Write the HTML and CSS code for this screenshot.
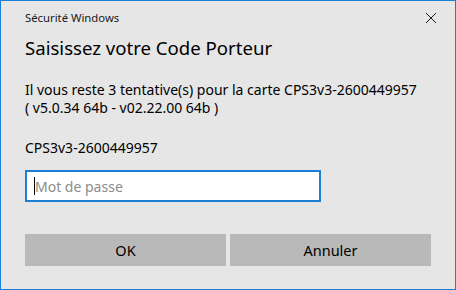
FILE: index.html
```html
<!DOCTYPE html>
<html lang="fr">
<head>
  <meta charset="UTF-8" />
  <title>Sécurité Windows</title>
  <link rel="stylesheet" href="styles.css">
</head>
<body>
  <div class="dialog">
    <div class="titlebar">
      <span class="app-title">Sécurité Windows</span>
      <button class="close" aria-label="Fermer">
        <svg width="12" height="12" viewBox="0 0 12 12">
          <path d="M1 1 L11 11 M11 1 L1 11" stroke="#1a1a1a" stroke-width="1" fill="none" />
        </svg>
      </button>
    </div>

    <h1 class="heading">Saisissez votre Code Porteur</h1>

    <p class="message">
      Il vous reste 3 tentative(s) pour la carte CPS3v3-2600449957<br>
      ( v5.0.34 64b - v02.22.00 64b )
    </p>

    <p class="card-id">CPS3v3-2600449957</p>

    <div class="field">
      <span class="caret"></span>
      <input type="password" class="pin" placeholder="Mot de passe">
    </div>

    <div class="actions">
      <button class="btn">OK</button>
      <button class="btn">Annuler</button>
    </div>
  </div>
</body>
</html>
```

FILE: styles.css
```css
body {
  margin: 0;
  font-family: "Noto Sans", "Open Sans", sans-serif;
  background: #e6e6e6;
}

.dialog {
  width: 456px;
  height: 290px;
  box-sizing: border-box;
  border: 1px solid #1b7fd6;
  background: #e6e6e6;
  padding: 0 24px;
  color: #000;
}

.titlebar {
  height: 33px;
  display: flex;
  align-items: center;
  justify-content: space-between;
}

.app-title {
  font-size: 11.3px;
  color: #1a1a1a;
}

.close {
  border: none;
  background: none;
  padding: 0;
  margin-right: -7px;
  width: 14px;
  height: 14px;
  display: flex;
  align-items: center;
  justify-content: center;
}

.heading {
  margin: 0;
  font-size: 18.6px;
  font-weight: normal;
  line-height: 28px;
}

.message {
  margin: 19px 0 0;
  font-size: 14px;
  line-height: 18px;
}

.card-id {
  margin: 22px 0 0;
  font-size: 14px;
  line-height: 18px;
}

.field {
  position: relative;
  margin-top: 13px;
  width: 296px;
}

.pin {
  width: 100%;
  height: 32px;
  box-sizing: border-box;
  border: 2px solid #1b7fd6;
  background: #fff;
  padding: 0 8px;
  font-family: inherit;
  font-size: 14px;
  outline: none;
}

.pin::placeholder {
  color: #8c8c8c;
}

.caret {
  position: absolute;
  left: 9px;
  top: 7px;
  width: 1px;
  height: 18px;
  background: #000;
}

.actions {
  margin-top: 32px;
  display: flex;
  gap: 4px;
}

.btn {
  flex: 1;
  height: 32px;
  border: none;
  background: #b9b9b9;
  font-family: inherit;
  font-size: 14.5px;
  color: #000;
}
```
